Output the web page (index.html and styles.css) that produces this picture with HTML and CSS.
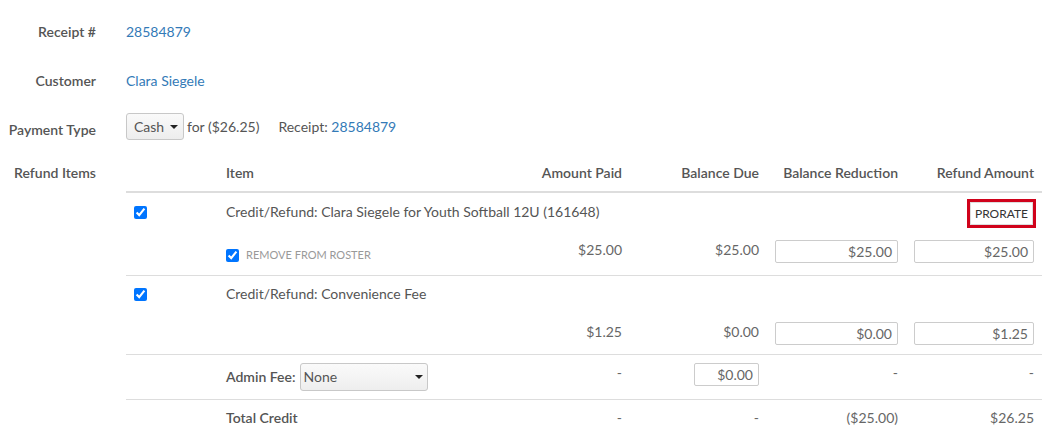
FILE: index.html
```html
<!DOCTYPE html>
<html>
<head>
<meta charset="utf-8">
<link rel="stylesheet" href="styles.css">
</head>
<body>
<div class="form">
  <div class="field f1">
    <div class="label">Receipt #</div>
    <div class="value"><a class="link">28584879</a></div>
  </div>
  <div class="field f2">
    <div class="label">Customer</div>
    <div class="value"><a class="link">Clara Siegele</a></div>
  </div>
  <div class="field f3">
    <div class="label">Payment Type</div>
    <div class="value pay">
      <div class="select sel-cash"><span>Cash</span><i class="caret"></i></div>
      <span class="for">for ($26.25)</span>
      <span class="rcpt">Receipt: <a class="link">28584879</a></span>
    </div>
  </div>
  <div class="field f4">
    <div class="label">Refund Items</div>
    <div class="value">
      <table class="items">
        <colgroup>
          <col class="c-chk"><col class="c-item"><col class="c-paid"><col class="c-due"><col class="c-red"><col class="c-ref">
        </colgroup>
        <thead>
          <tr>
            <th></th>
            <th class="left">Item</th>
            <th>Amount Paid</th>
            <th>Balance Due</th>
            <th>Balance Reduction</th>
            <th>Refund Amount</th>
          </tr>
        </thead>
        <tbody>
          <tr class="item">
            <td class="left"><input type="checkbox" checked class="chk"></td>
            <td colspan="4" class="left">Credit/Refund: Clara Siegele for Youth Softball 12U (161648)</td>
            <td><div class="prorate-cell"><span class="prorate-wrap"><span class="prorate">PRORATE</span></span></div></td>
          </tr>
          <tr class="vals">
            <td></td>
            <td class="left"><label class="remove"><input type="checkbox" checked class="chk"><span>REMOVE FROM ROSTER</span></label></td>
            <td class="num">$25.00</td>
            <td class="num">$25.00</td>
            <td><div class="inp">$25.00</div></td>
            <td><div class="inp">$25.00</div></td>
          </tr>
          <tr class="item">
            <td class="left"><input type="checkbox" checked class="chk"></td>
            <td colspan="5" class="left">Credit/Refund: Convenience Fee</td>
          </tr>
          <tr class="vals v2">
            <td></td>
            <td></td>
            <td class="num">$1.25</td>
            <td class="num">$0.00</td>
            <td><div class="inp">$0.00</div></td>
            <td><div class="inp">$1.25</div></td>
          </tr>
          <tr class="admin">
            <td></td>
            <td class="left"><div class="admin-wrap"><span class="bold">Admin Fee:</span><div class="select sel-admin"><span>None</span><i class="caret"></i></div></div></td>
            <td class="num">-</td>
            <td><div class="inp inp-small">$0.00</div></td>
            <td class="num">-</td>
            <td class="num">-</td>
          </tr>
          <tr class="total">
            <td></td>
            <td class="left bold">Total Credit</td>
            <td class="num">-</td>
            <td class="num">-</td>
            <td class="num">($25.00)</td>
            <td class="num">$26.25</td>
          </tr>
        </tbody>
      </table>
    </div>
  </div>
</div>
</body>
</html>
```

FILE: styles.css
```css
html, body {
  margin: 0;
  padding: 0;
  background: #fff;
}
body {
  font-family: Lato, "Liberation Sans", sans-serif;
  font-size: 14px;
  color: #555;
  line-height: 20px;
}
.form {
  padding-top: 22px;
}
.field {
  display: flex;
  align-items: flex-start;
}
.label {
  width: 96px;
  flex: none;
  text-align: right;
  font-family: "Lato Semibold", Lato, "Liberation Sans", sans-serif;
  font-weight: 600;
  color: #555;
}
.value {
  margin-left: 30px;
}
.f1 { margin-bottom: 29px; }
.f2 { margin-bottom: 22px; }
.f3 { margin-bottom: 15px; }
.f3 .label { padding-top: 7px; }
.f4 .label { padding-top: 8px; }
.link {
  color: #337ab7;
  text-decoration: none;
}
.pay {
  display: flex;
  align-items: center;
  height: 27px;
}
.select {
  box-sizing: border-box;
  border: 1px solid #c8c8c8;
  border-radius: 3px;
  background: linear-gradient(#fafafa, #ededed);
  display: flex;
  align-items: center;
  justify-content: space-between;
  color: #555;
}
.caret {
  width: 0;
  height: 0;
  border-left: 4px solid transparent;
  border-right: 4px solid transparent;
  border-top: 4px solid #222;
}
.sel-cash {
  width: 58px;
  height: 27px;
  padding: 0 5px 0 7px;
}
.for {
  margin-left: 3px;
}
.rcpt {
  margin-left: 19px;
}
.items {
  border-collapse: collapse;
  table-layout: fixed;
  width: 916px;
}
.c-chk { width: 92px; }
.c-item { width: 272px; }
.c-paid { width: 140px; }
.c-due { width: 137px; }
.c-red { width: 139px; }
.c-ref { width: 136px; }
.items th, .items td {
  padding: 0 8px;
  text-align: right;
  white-space: nowrap;
}
.items .left { text-align: left; }
.items th {
  font-family: "Lato Semibold", Lato, "Liberation Sans", sans-serif;
  font-weight: 600;
  padding-top: 8px;
  padding-bottom: 8px;
  border-bottom: 2px solid #ddd;
}
.num {
  color: #666;
}
.chk {
  width: 13px;
  height: 13px;
  margin: 0;
  vertical-align: middle;
  position: relative;
  top: -1px;
}
tr.item td {
  padding-top: 9px;
  padding-bottom: 8px;
  vertical-align: middle;
}
tr.item + tr.vals + tr.item td {
  padding-top: 8px;
}
.prorate-cell {
  height: 20px;
  display: flex;
  align-items: center;
  justify-content: flex-end;
}
.prorate-wrap {
  display: block;
  flex: none;
  border: 3px solid #d0021b;
  margin-top: 2px;
  margin-right: -2px;
  line-height: 0;
}
.prorate {
  display: block;
  border: 1px solid #ddd;
  background: #fff;
  color: #333;
  font-size: 12px;
  line-height: 21px;
  padding: 0 4px;
}
tr.vals td {
  padding-top: 10px;
  padding-bottom: 12px;
  vertical-align: top;
  border-bottom: 1px solid #ddd;
}
tr.v2 td {
  padding-bottom: 9px;
}
.inp {
  box-sizing: border-box;
  width: 100%;
  height: 23px;
  border: 1px solid #ccc;
  border-radius: 2px;
  line-height: 21px;
  padding: 0 5px;
  text-align: right;
  color: #666;
}
.inp-small {
  width: 65px;
  margin-left: auto;
}
.remove {
  display: flex;
  align-items: center;
  gap: 7px;
  padding-top: 8px;
  height: 14px;
  line-height: 14px;
  font-size: 11px;
  color: #999;
}
.remove .chk { top: 0; }
tr.admin td {
  padding-top: 8px;
  padding-bottom: 8px;
  vertical-align: top;
  border-bottom: 1px solid #ddd;
}
.admin-wrap {
  display: flex;
  align-items: center;
  height: 28px;
}
.bold {
  font-family: "Lato Semibold", Lato, "Liberation Sans", sans-serif;
  font-weight: 600;
}
.sel-admin {
  width: 128px;
  height: 28px;
  margin-left: 4px;
  padding: 0 4px 0 3px;
  background: linear-gradient(#fafafa, #eeeeee);
}
tr.total td {
  padding-top: 8px;
  padding-bottom: 8px;
}
```
